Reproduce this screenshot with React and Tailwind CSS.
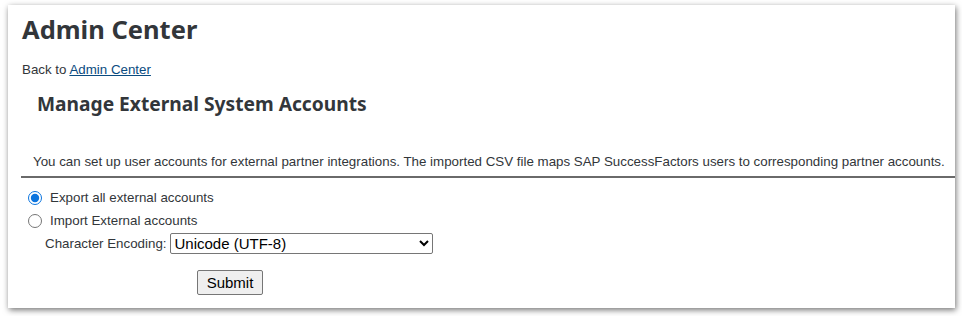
export default function App() {
  return (
    <div className="w-[962px] h-[316px] bg-white pt-[5px] pl-[8px] overflow-hidden">
      <div className="w-[947px] h-[303px] bg-white shadow-[1px_2px_6px_rgba(0,0,0,0.55)] text-[#32363a] font-['Liberation_Sans',sans-serif] pt-[8px]">
        <h1 className="pl-[14px] text-[25.5px] leading-[32px] font-bold font-['Noto_Sans',sans-serif]">Admin Center</h1>
        <div className="pl-[14px] mt-[16px] text-[13.33px] leading-[18px]">
          Back to <a href="#" className="text-[#0a4b80] underline">Admin Center</a>
        </div>
        <h2 className="pl-[29px] mt-[13px] text-[19.2px] leading-[24px] font-bold font-['Noto_Sans',sans-serif]">Manage External System Accounts</h2>
        <p className="pl-[25px] mt-[37px] text-[13.33px] leading-[18px] whitespace-nowrap">
          You can set up user accounts for external partner integrations. The imported CSV file maps SAP SuccessFactors users to corresponding partner accounts.
        </p>
        <div className="ml-[13px] mt-[5px] h-[2px] bg-[#6a6a6a]" />
        <div className="pl-[20px] mt-[8px] text-[13.33px] leading-[18px]">
          <label className="flex items-center h-[23px]">
            <input type="radio" name="exp" defaultChecked className="w-[14px] h-[14px] m-0 mr-[8px] accent-[#0b74de]" />
            <span>Export all external accounts</span>
          </label>
          <label className="flex items-center h-[23px]">
            <input type="radio" name="exp" className="w-[14px] h-[14px] m-0 mr-[8px]" />
            <span>Import External accounts</span>
          </label>
          <div className="flex items-center pl-[17px] h-[23px]">
            <span>Character Encoding:</span>
            <select className="ml-[3px] w-[263px] h-[21px] border border-[#767676] rounded-[2px] font-['Liberation_Sans',sans-serif] text-[15px] text-black bg-white">
              <option>Unicode (UTF-8)</option>
            </select>
          </div>
          <div className="pl-[169px] mt-[15px]">
            <button className="w-[66px] h-[25px] border border-[#767676] rounded-[2px] bg-[#efefef] font-['Liberation_Sans',sans-serif] text-[15px] text-black">Submit</button>
          </div>
        </div>
      </div>
    </div>
  );
}
